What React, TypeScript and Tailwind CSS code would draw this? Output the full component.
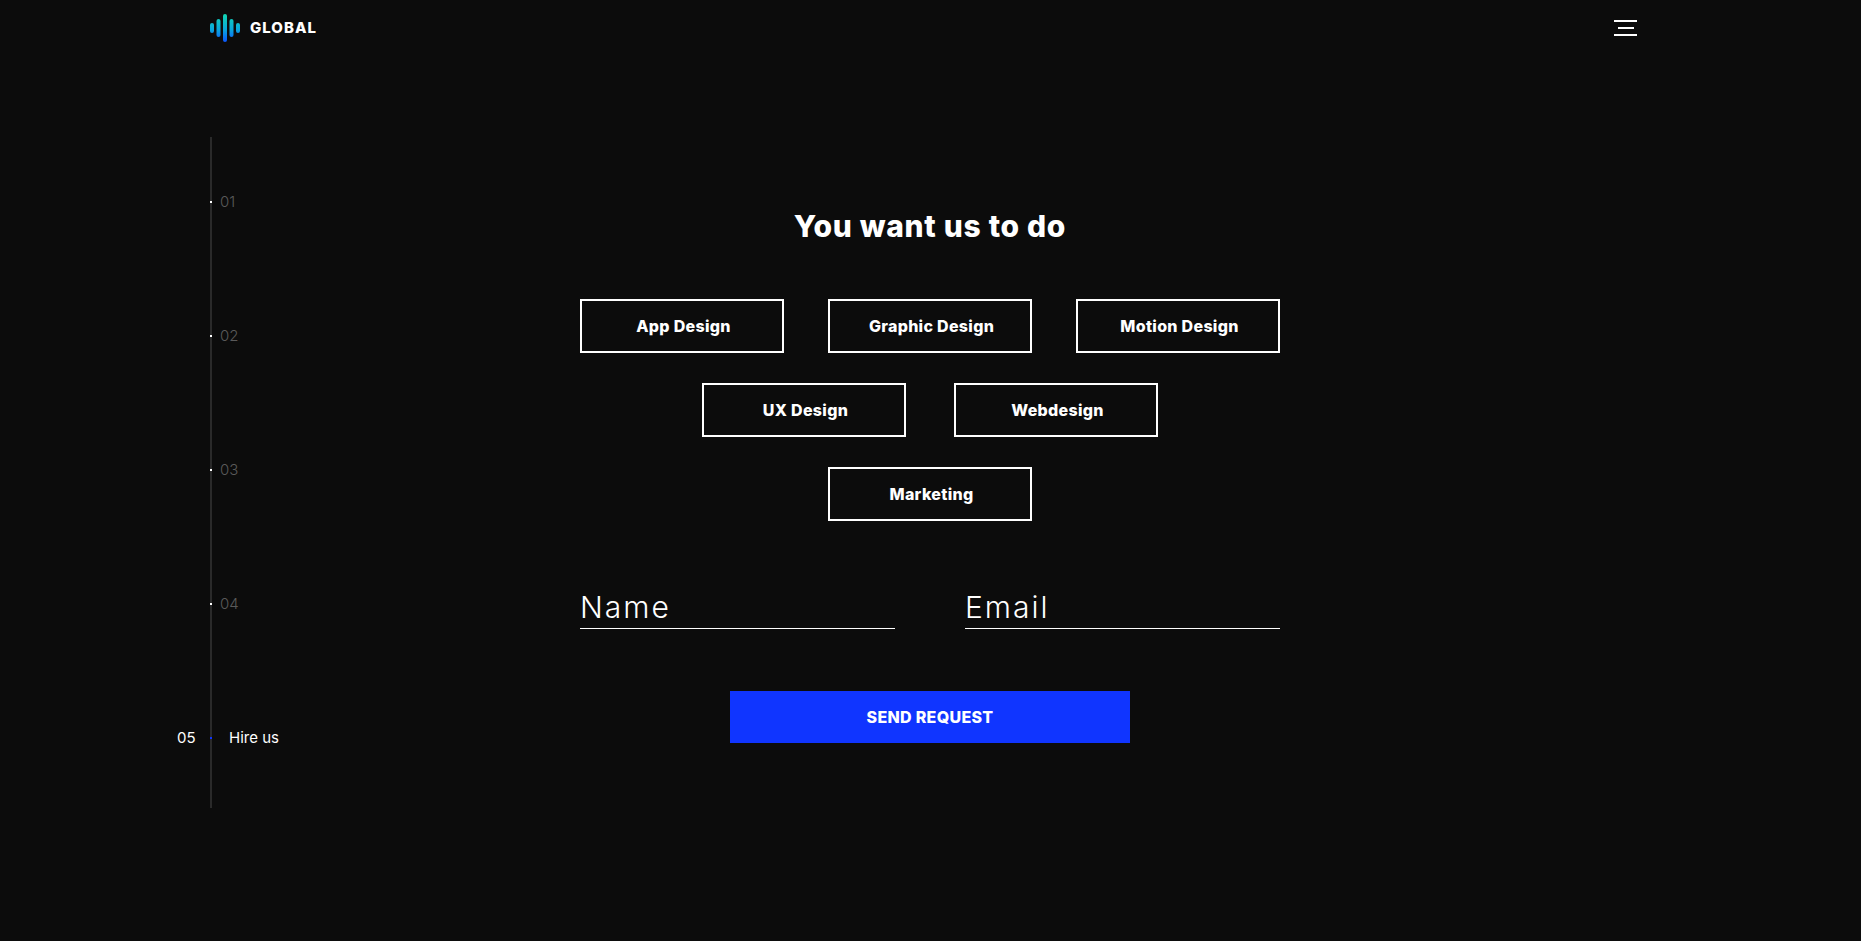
import React from 'react';

const services = [
    ['App Design', 'Graphic Design', 'Motion Design'],
    ['UX Design', 'Webdesign'],
    ['Marketing'],
];

const steps = ['01', '02', '03', '04'];

function Logo() {
    return (
        <svg width="30" height="30" viewBox="0 0 30 30" className="block">
            <defs>
                <linearGradient id="wave" gradientUnits="userSpaceOnUse" x1="0" y1="1" x2="0" y2="29">
                    <stop offset="0" stopColor="#12d6b0" />
                    <stop offset="0.55" stopColor="#0aa8dc" />
                    <stop offset="1" stopColor="#0b56ff" />
                </linearGradient>
            </defs>
            <rect x="0" y="10" width="4" height="10" rx="2" fill="url(#wave)" />
            <rect x="6.5" y="6" width="4" height="18" rx="2" fill="url(#wave)" />
            <rect x="13" y="1" width="4" height="28" rx="2" fill="url(#wave)" />
            <rect x="19.5" y="6" width="4" height="18" rx="2" fill="url(#wave)" />
            <rect x="26" y="10" width="4" height="10" rx="2" fill="url(#wave)" />
        </svg>
    );
}

export default function App() {
    return (
        <div className="h-[941px] overflow-hidden bg-[#0c0c0c] font-['Inter',sans-serif] text-white">
            <header className="flex h-[56px] items-center justify-between pl-[210px] pr-[224px]">
                <div className="flex items-center gap-[10px]">
                    <Logo />
                    <span className="text-[15px] font-extrabold tracking-[1px]">GLOBAL</span>
                </div>
                <button className="flex w-[23px] flex-col items-center gap-[5px]">
                    <span className="h-[2px] w-full bg-white" />
                    <span className="h-[2px] w-[16px] bg-white" />
                    <span className="h-[2px] w-full bg-white" />
                </button>
            </header>

            <main className="flex">
                <aside className="w-[580px] pl-[210px] pt-[81px]">
                    <div className="flex h-[671px] w-[2px] flex-col gap-[114px] bg-[#2a2a2a] pt-[54px]">
                        {steps.map((step) => (
                            <div key={step} className="flex h-[20px] items-center">
                                <span className="mt-[2px] h-[2px] w-[2px] shrink-0 bg-white" />
                                <span className="ml-[8px] mt-[2px] text-[15px] font-light text-[#5a5a5a]">{step}</span>
                            </div>
                        ))}
                        <div className="-ml-[33px] flex h-[20px] items-center">
                            <span className="mt-[2px] w-[33px] shrink-0 text-[15px] font-normal">05</span>
                            <span className="mt-[2px] h-[2px] w-[2px] shrink-0 bg-[#1035ff]" />
                            <span className="ml-[17px] mt-[2px] shrink-0 text-[15px] font-normal">Hire us</span>
                        </div>
                    </div>
                </aside>

                <section className="w-[700px] pt-[150px]">
                    <h1 className="text-center text-[30px] leading-[40px] font-extrabold tracking-[0.7px]">You want us to do</h1>

                    <div className="mt-[53px] flex flex-col gap-[30px]">
                        {services.map((row, i) => (
                            <div key={i} className={i === 1 ? 'flex justify-center gap-[48px]' : 'flex justify-center gap-[44px]'}>
                                {row.map((name) => (
                                    <button key={name} className="h-[54px] w-[204px] border-2 border-white pl-[3px] text-center text-[16px] font-extrabold tracking-[0.3px]">
                                        {name}
                                    </button>
                                ))}
                            </div>
                        ))}
                    </div>

                    <div className="mt-[68px] flex justify-between">
                        <div className="h-[40px] w-[315px] border-b border-white text-[30px] leading-[36px] font-light tracking-[2px]">Name</div>
                        <div className="h-[40px] w-[315px] border-b border-white text-[30px] leading-[36px] font-light tracking-[2px]">Email</div>
                    </div>

                    <button className="mx-auto mt-[62px] block h-[52px] w-[400px] bg-[#1035ff] text-[16px] font-extrabold tracking-[0.3px]">SEND REQUEST</button>
                </section>
            </main>
        </div>
    );
}
